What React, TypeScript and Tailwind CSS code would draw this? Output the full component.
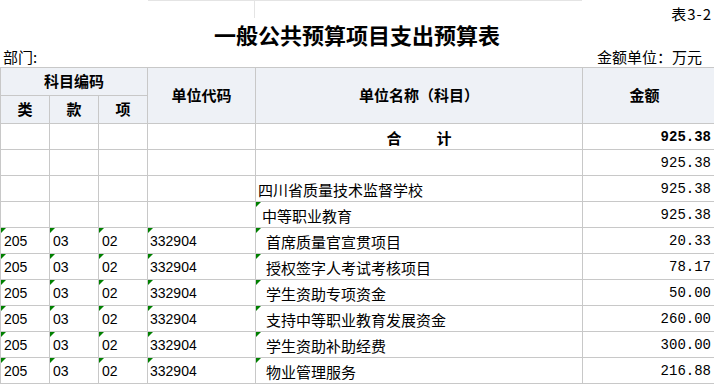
import React from "react";

const CJK = { fontFamily: '"Noto Sans CJK SC", "Noto Sans", sans-serif' };

function Tri() {
  return (
    <span className="absolute top-0 left-0 w-0 h-0 border-t-[5px] border-t-[#008000] border-r-[5px] border-r-transparent" />
  );
}

type Item = { code: boolean; name: string; indent: number; amt: string; tri: boolean; bold?: boolean; total?: boolean };

const rows: Item[] = [
  { code: false, name: "", indent: 0, amt: "925.38", tri: false, bold: true, total: true },
  { code: false, name: "", indent: 0, amt: "925.38", tri: false },
  { code: false, name: "四川省质量技术监督学校", indent: 2, amt: "925.38", tri: false },
  { code: false, name: "中等职业教育", indent: 6, amt: "925.38", tri: true },
  { code: true, name: "首席质量官宣贯项目", indent: 10, amt: "20.33", tri: true },
  { code: true, name: "授权签字人考试考核项目", indent: 10, amt: "78.17", tri: true },
  { code: true, name: "学生资助专项资金", indent: 10, amt: "50.00", tri: true },
  { code: true, name: "支持中等职业教育发展资金", indent: 10, amt: "260.00", tri: true },
  { code: true, name: "学生资助补助经费", indent: 10, amt: "300.00", tri: true },
  { code: true, name: "物业管理服务", indent: 10, amt: "216.88", tri: true },
];

const cellBase = "relative bg-white flex items-end pb-[4px] leading-[15px] overflow-hidden whitespace-nowrap";
const codeFont = { fontFamily: '"Liberation Sans", Arial, sans-serif', fontSize: "14px" };
const amtFont = { fontFamily: '"Liberation Mono", monospace', fontSize: "14px" };

export default function App() {
  return (
    <div className="w-[714px] h-[384px] overflow-hidden bg-white text-black" style={CJK}>
      <div className="flex h-[22px]">
        <div className="w-[148px]" />
        <div className="w-[434px] h-[18px] border-t border-[#e4e4e4] flex">
          <div className="w-[107px] h-full border-r border-[#e4e4e4]" />
        </div>
        <div className="flex-1 flex justify-end items-end pr-[2px] text-[15px] leading-[16px] tracking-[1px]">表3-2</div>
      </div>
      <div className="h-[24px] flex justify-center items-center text-[22px] leading-[24px] font-bold">
        一般公共预算项目支出预算表
      </div>
      <div className="h-[21px] flex justify-between items-end pb-[3px] text-[15px] leading-[15px]">
        <span className="pl-[3px]">部门:</span>
        <span className="pr-[12px]">金额单位：万元</span>
      </div>
      <div
        className="grid bg-[#c8c8c8] gap-px p-px w-[716px]"
        style={{ gridTemplateColumns: "48px 48px 48px 107px 326px 131px", gridTemplateRows: "27px 27px repeat(10, 25px)" }}
      >
        <div className="col-span-3 bg-[#eef1f6] flex items-center justify-center text-[15px] font-bold">科目编码</div>
        <div className="row-span-2 bg-[#eef1f6] flex items-center justify-center text-[15px] font-bold">单位代码</div>
        <div className="row-span-2 bg-[#eef1f6] flex items-center justify-center text-[15px] font-bold">单位名称（科目）</div>
        <div className="row-span-2 bg-[#eef1f6] flex items-center justify-center text-[15px] font-bold pr-[8px]">金额</div>
        <div className="bg-[#eef1f6] flex items-center justify-center text-[15px] font-bold">类</div>
        <div className="bg-[#eef1f6] flex items-center justify-center text-[15px] font-bold">款</div>
        <div className="bg-[#eef1f6] flex items-center justify-center text-[15px] font-bold">项</div>
        {rows.map((r, i) => (
          <React.Fragment key={i}>
            <div className={cellBase + " pl-[3px]"} style={codeFont}>
              {r.code && <Tri />}
              {r.code ? "205" : ""}
            </div>
            <div className={cellBase + " pl-[3px]"} style={codeFont}>
              {r.code && <Tri />}
              {r.code ? "03" : ""}
            </div>
            <div className={cellBase + " pl-[3px]"} style={codeFont}>
              {r.code && <Tri />}
              {r.code ? "02" : ""}
            </div>
            <div className={cellBase + " pl-[2px]"} style={codeFont}>
              {r.code && <Tri />}
              {r.code ? "332904" : ""}
            </div>
            <div className={cellBase + " text-[15px]" + (r.total ? " justify-center font-bold" : "")} style={{ paddingLeft: r.total ? 0 : r.indent }}>
              {r.tri && <Tri />}
              {r.total ? (
                <>
                  <span>合</span>
                  <span className="ml-[35px]">计</span>
                </>
              ) : (
                r.name
              )}
            </div>
            <div className={cellBase + " justify-end pr-[3px]" + (r.bold ? " font-bold" : "")} style={amtFont}>
              {r.amt}
            </div>
          </React.Fragment>
        ))}
      </div>
    </div>
  );
}
